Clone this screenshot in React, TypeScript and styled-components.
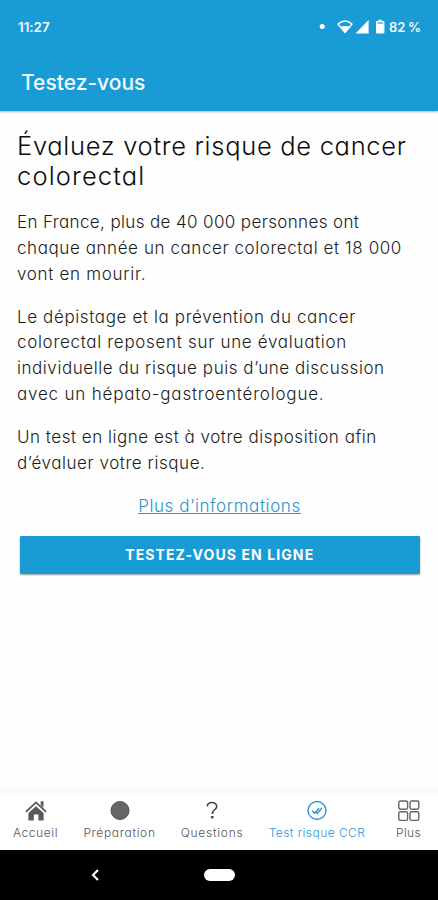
import React from "react";
import styled, { createGlobalStyle } from "styled-components";

const BLUE = "#199cd6";

const GlobalStyle = createGlobalStyle`
  * { box-sizing: border-box; }
  body {
    margin: 0;
    background: #fff;
    font-family: Inter, "Liberation Sans", sans-serif;
    font-feature-settings: "cv11";
  }
`;

const Screen = styled.div`
  display: flex;
  flex-direction: column;
  width: 100%;
  height: 900px;
  overflow: hidden;
  background: #fefefe;
`;

const Header = styled.header`
  flex: none;
  height: 111px;
  background: ${BLUE};
  color: #f2faff;
  box-shadow: 0 1px 2px rgba(60, 60, 120, 0.4);
`;

const StatusBar = styled.div`
  display: flex;
  align-items: center;
  justify-content: space-between;
  height: 54px;
  padding: 0 17px 0 18px;
  font-size: 13.5px;
  font-weight: 600;
`;

const Clock = styled.span`
  letter-spacing: -0.05px;
`;

const StatusIcons = styled.div`
  display: flex;
  align-items: center;

  svg { display: block; }
`;

const BatteryLevel = styled.span`
  margin-left: 3px;
  font-size: 13px;
  letter-spacing: -0.1px;
  word-spacing: -0.4px;
`;

const Title = styled.h1`
  margin: 0;
  padding: 0 21px;
  height: 57px;
  line-height: 57px;
  font-size: 21px;
  font-weight: 450;
  letter-spacing: 0;
`;

const Main = styled.main`
  flex: 1;
  display: flex;
  flex-direction: column;
  padding: 20px 17px 0;
`;

const Heading = styled.h2`
  margin: 0 0 19px;
  font-size: 25.5px;
  font-weight: 300;
  line-height: 30px;
  color: #0c0c0c;
`;

const Paragraph = styled.p`
  margin: 0 0 17.3px;
  font-size: 17px;
  font-weight: 300;
  line-height: 25.8px;
  color: #1c1c1c;
`;

const Line = styled.span<{ $tracking: number }>`
  display: block;
  white-space: nowrap;
  letter-spacing: ${(p) => p.$tracking}px;
`;

const MoreLink = styled.a`
  align-self: center;
  margin-top: -1px;
  padding-left: 1px;
  font-size: 17px;
  font-weight: 300;
  line-height: 26px;
  letter-spacing: 0.6px;
  color: #2c93cf;
  text-decoration: underline;
  text-decoration-thickness: 1px;
  text-underline-offset: 1px;
`;

const PrimaryButton = styled.button`
  height: 38px;
  margin: 17px 1.5px 0 3px;
  padding: 0 0 2px;
  border: 0;
  border-radius: 1px;
  background: ${BLUE};
  box-shadow: 0 1px 2px rgba(0, 0, 0, 0.4);
  color: #fff;
  font: inherit;
  font-size: 14px;
  font-weight: 700;
  letter-spacing: 1.1px;
`;

const TabBar = styled.nav`
  flex: none;
  display: flex;
  gap: 25.5px;
  height: 61px;
  padding: 7px 17px 0 13px;
  background: #fff;
  border-top: 4px solid #f9f9f9;
`;

const Tab = styled.a<{ $active?: boolean; $width: number; $tracking: number }>`
  display: flex;
  flex-direction: column;
  align-items: center;
  width: ${(p) => p.$width}px;
  font-size: 12px;
  font-weight: 300;
  line-height: 16px;
  letter-spacing: ${(p) => p.$tracking}px;
  white-space: nowrap;
  color: ${(p) => (p.$active ? "#2b96d8" : "#555")};

  &:last-child { margin-left: auto; }

  svg { display: block; margin-bottom: 3px; }
`;

const SystemBar = styled.div`
  flex: none;
  display: grid;
  grid-template-columns: 1fr 31px 1fr;
  align-items: center;
  height: 50px;
  background: #000;

  svg { display: block; justify-self: center; margin-right: 14px; }
`;

const HomePill = styled.span`
  height: 12px;
  border-radius: 6px;
  background: #fff;
`;

const StatusGlyphs = () => (
  <svg width="68" height="16" viewBox="0 0 68 16" fill="#fff">
    <circle cx="4.2" cy="7.4" r="2.5" />
    <path d="M20 5 Q27 -.9 34 5 L27 13.6Z" fill={BLUE} stroke="#fff" strokeWidth="1.4" strokeLinejoin="round" />
    <path d="M22 7.8 Q27 6 32 7.8 L27 13.6Z" />
    <path d="M50.6 1v13.5H37.5z" />
    <path d="M59 2h1.6V.8h3.2V2h1.6a1 1 0 0 1 1 1v10.5a1 1 0 0 1-1 1H59a1 1 0 0 1-1-1V3a1 1 0 0 1 1-1z" />
    <path d="M59.3 3.3h5.8v1.5h-5.8z" fill={BLUE} opacity=".75" />
  </svg>
);

const HomeIcon = () => (
  <svg width="22" height="22" viewBox="0 0 22 22" fill="#5a5a5a">
    <path d="M3.4 13 11 6.2l7.6 6.8v7.4h-5.2v-6H8.8v6H3.4z" />
    <path d="M.9 11.9 11 2.4l10.1 9.5" fill="none" stroke="#555" strokeWidth="1.8" />
    <path d="M15.7 1.3h2.8v6.4l-2.8-2.6z" />
  </svg>
);

const DotIcon = () => (
  <svg width="22" height="22" viewBox="0 0 22 22">
    <circle cx="11" cy="10.5" r="9" fill="#666" stroke="#505050" strokeWidth="1" />
  </svg>
);

const QuestionIcon = () => (
  <svg width="22" height="22" viewBox="0 0 22 22" fill="none" stroke="#444" strokeWidth="1.6">
    <path d="M6.3 6.4C6.6 1.2 15.8 1.4 15.7 6.4c-.1 3.4-4.4 3.4-4.4 7.6" />
    <path d="M11.3 16v2.4" strokeWidth="2.4" />
  </svg>
);

const CheckIcon = () => (
  <svg width="22" height="22" viewBox="0 0 22 22" fill="none" stroke="#2b96d8" strokeWidth="1.4">
    <circle cx="11" cy="10.5" r="9" />
    <path d="M6.2 10.8l2.3 2.4 4.6-5M10 12.3l1.2 1.1 4.7-5.4" strokeWidth="1.4" />
  </svg>
);

const GridIcon = () => (
  <svg width="22" height="22" viewBox="0 0 22 22" fill="none" stroke="#666" strokeWidth="1.4">
    <rect x=".8" y="1" width="8.8" height="8.2" rx="1.6" />
    <rect x="12" y="1" width="8.8" height="8.2" rx="1.6" />
    <rect x=".8" y="11.8" width="8.8" height="8.6" rx="1.6" />
    <rect x="12" y="11.8" width="8.8" height="8.6" rx="1.6" />
  </svg>
);

type TextLine = [text: string, tracking: number];

const headingLines: TextLine[] = [
  ["Évaluez votre risque de cancer", 0.7],
  ["colorectal", 1.15],
];

const paragraphs: TextLine[][] = [
  [
    ["En France, plus de 40 000 personnes ont", 0.37],
    ["chaque année un cancer colorectal et 18 000", 0.58],
    ["vont en mourir.", 0.7],
  ],
  [
    ["Le dépistage et la prévention du cancer", 0.62],
    ["colorectal reposent sur une évaluation", 0.69],
    ["individuelle du risque puis d’une discussion", 0.55],
    ["avec un hépato-gastroentérologue.", 0.8],
  ],
  [
    ["Un test en ligne est à votre disposition afin", 0.52],
    ["d’évaluer votre risque.", 0.56],
  ],
];

const tabs = [
  { label: "Accueil", width: 45, tracking: 0.6, Icon: HomeIcon },
  { label: "Préparation", width: 72, tracking: 0.66, Icon: DotIcon },
  { label: "Questions", width: 62, tracking: 0.74, Icon: QuestionIcon },
  { label: "Test risque CCR", width: 97, tracking: 0.45, Icon: CheckIcon, active: true },
  { label: "Plus", width: 25, tracking: 0.35, Icon: GridIcon },
];

const renderLines = (lines: TextLine[]) =>
  lines.map(([text, tracking]) => (
    <Line key={text} $tracking={tracking}>{text}</Line>
  ));

export default function App() {
  return (
    <>
      <GlobalStyle />
      <Screen>
        <Header>
          <StatusBar>
            <Clock>11:27</Clock>
            <StatusIcons>
              <StatusGlyphs />
              <BatteryLevel>82 %</BatteryLevel>
            </StatusIcons>
          </StatusBar>
          <Title>Testez-vous</Title>
        </Header>
        <Main>
          <Heading>{renderLines(headingLines)}</Heading>
          {paragraphs.map((lines) => (
            <Paragraph key={lines[0][0]}>{renderLines(lines)}</Paragraph>
          ))}
          <MoreLink>Plus d’informations</MoreLink>
          <PrimaryButton>TESTEZ-VOUS EN LIGNE</PrimaryButton>
        </Main>
        <TabBar>
          {tabs.map(({ label, width, tracking, Icon, active }) => (
            <Tab key={label} $width={width} $tracking={tracking} $active={active}>
              <Icon />
              {label}
            </Tab>
          ))}
        </TabBar>
        <SystemBar>
          <svg width="10" height="14" viewBox="0 0 10 14" fill="none" stroke="#fff" strokeWidth="2.2">
            <path d="M8 2 3 7l5 5" />
          </svg>
          <HomePill />
        </SystemBar>
      </Screen>
    </>
  );
}
